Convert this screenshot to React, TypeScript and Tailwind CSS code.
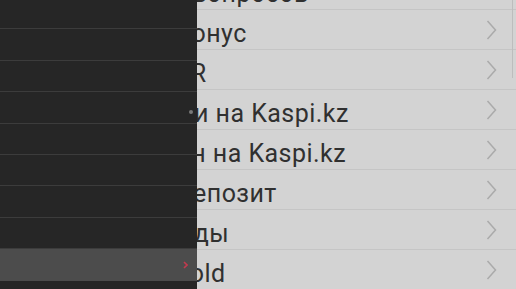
import React from "react";

const items = [
  { text: "Ответы на 100 вопросов", pad: "pl-[9px]" },
  { text: "Kaspi бонус", pad: "pl-[106px]" },
  { text: "Kaspi QR", pad: "pl-[102px]" },
  { text: "Покупки на Kaspi.kz", pad: "pl-[106px]" },
  { text: "Магазин на Kaspi.kz", pad: "pl-[102px]" },
  { text: "Мой депозит", pad: "pl-[119px]" },
  { text: "Переводы", pad: "pl-[105px]" },
  { text: "Kaspi Gold", pad: "pl-[101px]" },
];

function Chevron() {
  return (
    <svg width="11" height="20" viewBox="0 0 11 20" fill="none">
      <path d="M1.5 1 L9.5 10 L1.5 19" stroke="#aaaaaa" strokeWidth="1.5" />
    </svg>
  );
}

function MenuList() {
  return (
    <div className="flex flex-col -mt-[30px]">
      {items.map((it) => (
        <div
          key={it.text}
          className="relative h-[40px] flex items-center border-b border-[#c5c5c5]"
        >
          <span
            className={
              "flex-1 text-[25px] leading-none tracking-[0.45px] text-[#303030] pt-[7px] whitespace-nowrap " +
              it.pad
            }
          >
            {it.text}
          </span>
          <div className="pr-[19px]">
            <Chevron />
          </div>
        </div>
      ))}
    </div>
  );
}

function Drawer() {
  const rows = [0, 1, 2, 3, 4, 5, 6, 7, 8, 9];
  return (
    <div className="absolute left-0 top-0 h-full w-[197px] bg-[#262626] overflow-hidden">
      <div className="flex flex-col -mt-[2px]">
        {rows.map((i) => (
          <div
            key={i}
            className={
              i === 8
                ? "h-[31.4px] bg-[#4c4c4c] flex items-center justify-end pr-[9px]"
                : "h-[31.4px] border-b border-[#3c3c3c] flex items-center justify-end pr-[4px]"
            }
          >
            {i === 3 && (
              <span className="w-[4px] h-[4px] rounded-full bg-[#7a7a7a] mt-[10px]" />
            )}
            {i === 8 && (
              <svg width="5" height="8" viewBox="0 0 5 8" fill="none">
                <path d="M1 1 L4 4 L1 7" stroke="#c23a4e" strokeWidth="1.6" />
              </svg>
            )}
          </div>
        ))}
      </div>
    </div>
  );
}

export default function App() {
  return (
    <div
      className="relative w-[516px] h-[289px] overflow-hidden bg-[#d3d3d3]"
      style={{ fontFamily: "Roboto, 'Noto Sans', sans-serif" }}
    >
      <MenuList />
      <div className="absolute right-[3px] top-0 w-[1px] h-[78px] bg-[#bdbdbd]" />
      <Drawer />
    </div>
  );
}
